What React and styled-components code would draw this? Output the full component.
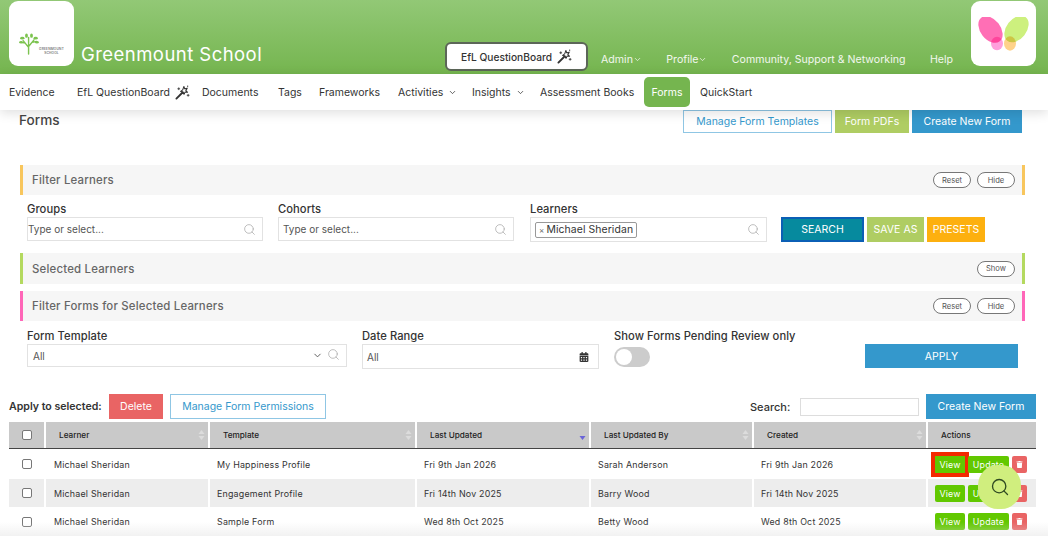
import React from 'react'
import styled, { createGlobalStyle } from 'styled-components'
import { Search, ChevronDown } from 'lucide-react'
import { FaCalendarAlt, FaTrash } from 'react-icons/fa'

const GlobalStyle = createGlobalStyle`
  html, body {
    margin: 0;
    padding: 0;
    background: #fff;
    font-family: Inter, "Open Sans", sans-serif;
    color: #333;
  }
  * { box-sizing: border-box; }
`

const Page = styled.div`
  position: relative;
  width: 1048px;
  height: 536px;
  overflow: hidden;
`

const Header = styled.header`
  display: flex;
  height: 74px;
  padding: 1px 12px 0 9px;
  background: linear-gradient(#92c876, #75b54f);
`

const LogoTile = styled.div`
  width: 65px;
  height: 65px;
  flex: none;
  border-radius: 9px;
  background: #fff;
  display: flex;
  align-items: flex-end;
  justify-content: center;
  padding-bottom: ${p => p.$pad || 0}px;
`

const SchoolLogo = styled.div`
  display: flex;
  align-items: flex-end;
  gap: 0;
  padding-bottom: 9px;
  small {
    font-size: 3.2px;
    line-height: 4px;
    letter-spacing: 0.2px;
    text-align: center;
    color: #333;
    margin-bottom: 2px;
  }
`

const SchoolName = styled.h1`
  margin: 0 0 0 7px;
  align-self: flex-end;
  padding-bottom: 7px;
  font-size: 18.5px;
  line-height: 26px;
  font-weight: 400;
  color: #fff;
  letter-spacing: 0.45px;
  width: 364px;
  flex: none;
`

const BoardButton = styled.div`
  align-self: flex-end;
  margin-bottom: 3px;
  width: 143px;
  height: 29px;
  flex: none;
  background: #fff;
  border: 2px solid #5c6658;
  border-radius: 6px;
  display: flex;
  align-items: center;
  justify-content: center;
  gap: 5px;
  font-size: 10.2px;
  font-weight: 500;
  color: #333;
`

const TopLinks = styled.nav`
  display: flex;
  align-items: center;
  height: 30px;
  align-self: flex-end;
  flex: 1;
  padding: 0 18px 0 13px;
  justify-content: space-between;
`

const TopLink = styled.a`
  display: inline-flex;
  align-items: center;
  font-size: 10.6px;
  color: #f2f7ee;
  white-space: nowrap;
`

const NavBar = styled.nav`
  position: relative;
  z-index: 2;
  display: flex;
  align-items: center;
  height: 36px;
  padding-left: 9px;
  background: #fff;
  box-shadow: 0 3px 12px rgba(0, 0, 0, 0.13);
`

const NavItem = styled.a`
  display: inline-flex;
  align-items: center;
  gap: 5px;
  width: ${p => p.$w}px;
  margin-left: ${p => p.$ml || 0}px;
  flex: none;
  height: 30px;
  font-size: 10.5px;
  color: #333;
  white-space: nowrap;
  ${p => p.$active && `
    justify-content: center;
    background: #75b54f;
    color: #fff;
    border-radius: 5px;
  `}
`

const Content = styled.main`
  padding: 0 23px 0 20px;
`

const TitleRow = styled.div`
  display: flex;
  justify-content: space-between;
  height: 23px;
  padding-right: 3px;
`

const PageTitle = styled.h2`
  margin: 0 0 0 -1px;
  font-size: 13.6px;
  line-height: 21px;
  font-weight: 500;
  color: #444;
`

const TitleActions = styled.div`
  display: flex;
  gap: 3px;
`

const Btn = styled.button`
  width: ${p => p.$w}px;
  height: ${p => p.$h || 24}px;
  margin: ${p => p.$margin || 0};
  flex: none;
  padding: 0;
  font-family: inherit;
  font-size: ${p => p.$size || 10.5}px;
  color: ${p => p.$color || '#fff'};
  background: ${p => p.$bg || '#fff'};
  border: ${p => p.$border || 'none'};
  white-space: nowrap;
`

const Panel = styled.div`
  display: flex;
  align-items: center;
  justify-content: flex-end;
  gap: 6px;
  height: ${p => p.$h || 30}px;
  margin-top: ${p => p.$mt || 0}px;
  padding: 0 7px 0 9px;
  background: #f6f6f6;
  border-left: 3px solid ${p => p.$accent};
  border-right: 3px solid ${p => p.$accent};
`

const PanelTitle = styled.div`
  flex: 1;
  font-size: 11.4px;
  letter-spacing: 0.2px;
  font-weight: 500;
  color: #666;
`

const Pill = styled.button`
  width: ${p => p.$w || 38}px;
  height: 16px;
  padding: 0;
  font-family: inherit;
  font-size: 7.6px;
  color: #555;
  background: #fff;
  border: 1px solid #777;
  border-radius: 8px;
`

const FieldRow = styled.div`
  display: flex;
  align-items: flex-start;
  height: ${p => p.$h}px;
  padding: ${p => p.$pt}px 0 0 7px;
`

const Field = styled.div`
  width: ${p => p.$w}px;
  flex: none;
  margin-right: ${p => p.$mr || 0}px;
`

const Label = styled.label`
  display: block;
  height: 15px;
  font-size: 11.2px;
  line-height: 15px;
  letter-spacing: 0.05px;
  font-weight: 500;
  color: #333;
`

const InputBox = styled.div`
  display: flex;
  align-items: center;
  justify-content: space-between;
  height: ${p => p.$h || 24}px;
  padding: 0 6px 0 ${p => p.$pl ?? 0}px;
  border: 1px solid #e2e2e2;
  background: #fff;
  font-size: 10px;
  color: #555;
  svg { flex: none; }
`

const Tag = styled.span`
  display: inline-flex;
  align-items: center;
  gap: 2px;
  height: 16px;
  padding: 0 3px;
  border: 1px solid #999;
  border-radius: 2px;
  font-size: 10.4px;
  letter-spacing: 0.1px;
  color: #333;
  i {
    font-style: normal;
    font-size: 8px;
    color: #666;
  }
`

const ActionGroup = styled.div`
  display: flex;
  gap: 3px;
  margin: 15px 0 0 14px;
`

const Toggle = styled.div`
  width: 36px;
  height: 20px;
  margin-top: 3px;
  padding: 2px;
  border-radius: 10px;
  background: #ccc;
  &::before {
    content: '';
    display: block;
    width: 16px;
    height: 16px;
    border-radius: 50%;
    background: #fff;
  }
`

const Toolbar = styled.div`
  display: flex;
  align-items: center;
  height: 25px;
  margin: 0 -11px 0 -11px;
`

const ApplyLabel = styled.strong`
  width: 100px;
  flex: none;
  font-size: 10.6px;
  font-weight: 600;
  color: #333;
`

const SearchLabel = styled.span`
  margin-left: auto;
  width: 50px;
  font-size: 11px;
  font-weight: 500;
`

const SearchInput = styled.div`
  width: 119px;
  height: 18px;
  margin-right: 7px;
  border: 1px solid #ddd;
`

const Table = styled.div`
  margin: 3px -11px 0 -11px;
`

const gridColumns = '37px 164px 207px 174px 163px 174px 108px'

const HeadRow = styled.div`
  display: grid;
  grid-template-columns: ${gridColumns};
  height: 27px;
  border-bottom: 1px solid #444;
`

const HeadCell = styled.div`
  display: flex;
  align-items: center;
  justify-content: ${p => (p.$center ? 'center' : 'space-between')};
  padding: 0 ${p => (p.$center ? 0 : 3)}px 0 ${p => (p.$center ? 0 : 13)}px;
  margin-right: 2px;
  background: #c9c9c9;
  font-size: 8.2px;
  font-weight: 500;
  color: #222;
  &:last-child { margin-right: 0; }
`

const BodyRow = styled.div`
  display: grid;
  grid-template-columns: ${gridColumns};
  height: ${p => p.$h}px;
`

const BodyCell = styled.div`
  display: flex;
  align-items: center;
  justify-content: ${p => (p.$center ? 'center' : 'flex-start')};
  gap: 3px;
  padding-left: ${p => (p.$center ? 0 : p.$learner ? 8 : 7)}px;
  margin-right: 2px;
  background: ${p => (p.$alt ? '#ededed' : '#fff')};
  font-size: 8.9px;
  letter-spacing: 0.2px;
  font-weight: 400;
  color: #333;
  &:last-child { margin-right: 0; }
`

const Check = styled.span`
  display: block;
  width: 10px;
  height: 10px;
  background: #fff;
  border: 1px solid #777;
  border-radius: 2px;
`

const MiniBtn = styled.span`
  display: inline-flex;
  align-items: center;
  justify-content: center;
  width: ${p => p.$w}px;
  height: 17px;
  flex: none;
  border-radius: 2px;
  background: ${p => p.$bg};
  color: #fff;
  font-size: 8.8px;
  font-weight: 400;
  ${p => p.$focus && 'border-radius: 0; outline: 4px solid #f32a00; outline-offset: 0;'}
`

const BottomFade = styled.div`
  position: absolute;
  left: 0;
  right: 0;
  bottom: 0;
  height: 14px;
  background: linear-gradient(rgba(225, 225, 225, 0), rgba(225, 225, 225, 0.45));
  pointer-events: none;
`

const FloatSearch = styled.div`
  position: absolute;
  left: 978px;
  top: 465px;
  width: 43px;
  height: 44px;
  display: flex;
  align-items: center;
  justify-content: center;
  border-radius: 46%;
  background: #d0ee7e;
  color: #2f4a22;
`

const WandIcon = ({ size = 15, color = '#333' }) => (
  <svg width={size} height={size} viewBox="0 0 16 16" fill="none" stroke={color} strokeLinecap="round">
    <path d="M1.5 14.5 8 8" strokeWidth="2" />
    <path d="M9.5 1.5 10.3 4 13 3.6 11.5 5.8 13.4 7.8 10.7 7.6 9.6 10 8.6 7.4 6 6.8 8.2 5.2Z" strokeWidth="1.1" strokeLinejoin="round" />
    <path d="M4 3v2M3 4h2M14 10v2M13 11h2M13.5 1v1" strokeWidth="0.9" />
  </svg>
)

const TreeIcon = () => (
  <svg width="20" height="26" viewBox="0 0 24 26" fill="none" stroke="#7cc34f" strokeLinecap="round">
    <path d="M11.5 25V13M11.5 17 5 9M11.5 16 18 8M11.5 12V5M7.5 12 3 11M15.5 11 21 10" strokeWidth="1.7" />
    <g fill="#7cc34f" stroke="none">
      <ellipse cx="4" cy="6" rx="2.6" ry="1.6" />
      <ellipse cx="9" cy="3" rx="1.7" ry="2.6" />
      <ellipse cx="15" cy="3" rx="1.7" ry="2.6" />
      <ellipse cx="20" cy="6" rx="2.6" ry="1.6" />
      <ellipse cx="2.5" cy="11" rx="2.3" ry="1.5" />
      <ellipse cx="21.5" cy="11" rx="2.3" ry="1.5" />
    </g>
  </svg>
)

const Butterfly = () => (
  <svg width="51" height="34" viewBox="0 0 51 34" style={{ isolation: 'isolate' }}>
    <g style={{ mixBlendMode: 'multiply' }}>
      <ellipse cx="19" cy="26.5" rx="6" ry="6.8" fill="#ff9fdc" />
    </g>
    <g style={{ mixBlendMode: 'multiply' }}>
      <ellipse cx="32" cy="26.5" rx="6" ry="7.2" fill="#ffd28a" />
    </g>
    <g style={{ mixBlendMode: 'multiply' }}>
      <ellipse cx="12.5" cy="12.5" rx="10" ry="15" transform="rotate(-38 12.5 12.5)" fill="#ff6fb5" />
    </g>
    <g style={{ mixBlendMode: 'multiply' }}>
      <ellipse cx="38.5" cy="12" rx="10" ry="15" transform="rotate(38 38.5 12)" fill="#cdf07e" />
    </g>
  </svg>
)

const SortArrows = ({ active }) => (
  <svg width="7" height="12" viewBox="0 0 7 12">
    {!active && <path d="M3.5 1 6.5 5H.5Z" fill="#dcdcdc" />}
    <path d="M3.5 11 .5 7h6Z" fill={active ? '#6a64d8' : '#dcdcdc'} />
  </svg>
)

const rows = [
  { template: 'My Happiness Profile', updated: 'Fri 9th Jan 2026', by: 'Sarah Anderson', h: 30 },
  { template: 'Engagement Profile', updated: 'Fri 14th Nov 2025', by: 'Barry Wood', h: 28, alt: true },
  { template: 'Sample Form', updated: 'Wed 8th Oct 2025', by: 'Betty Wood', h: 29 }
]

const navItems = [
  ['Evidence', 68],
  ['EfL QuestionBoard', 125, 'wand'],
  ['Documents', 76],
  ['Tags', 41],
  ['Frameworks', 79],
  ['Activities', 74, 'chevron'],
  ['Insights', 68, 'chevron'],
  ['Assessment Books', 104]
]

const columns = ['Learner', 'Template', 'Last Updated', 'Last Updated By', 'Created']

const App = () => (
  <Page>
    <GlobalStyle />
    <Header>
      <LogoTile>
        <SchoolLogo>
          <TreeIcon />
          <small>
            GREENMOUNT
            <br />
            SCHOOL
          </small>
        </SchoolLogo>
      </LogoTile>
      <SchoolName>Greenmount School</SchoolName>
      <BoardButton>
        EfL QuestionBoard <WandIcon />
      </BoardButton>
      <TopLinks>
        <TopLink>
          Admin
          <ChevronDown size={9} />
        </TopLink>
        <TopLink>
          Profile
          <ChevronDown size={9} />
        </TopLink>
        <TopLink>Community, Support &amp; Networking</TopLink>
        <TopLink>Help</TopLink>
      </TopLinks>
      <LogoTile $pad={15}>
        <Butterfly />
      </LogoTile>
    </Header>

    <NavBar>
      {navItems.map(([label, w, icon]) => (
        <NavItem key={label} $w={w}>
          {label}
          {icon === 'wand' && <WandIcon />}
          {icon === 'chevron' && <ChevronDown size={9} />}
        </NavItem>
      ))}
      <NavItem $w={46} $active>
        Forms
      </NavItem>
      <NavItem $w={60} $ml={10}>
        QuickStart
      </NavItem>
    </NavBar>

    <Content>
      <TitleRow>
        <PageTitle>Forms</PageTitle>
        <TitleActions>
          <Btn $w={149} $h={23} $color="#3498cc" $border="1px solid #8fc6e4">
            Manage Form Templates
          </Btn>
          <Btn $w={74} $h={23} $bg="#afcd63">
            Form PDFs
          </Btn>
          <Btn $w={110} $h={23} $bg="#3498cc">
            Create New Form
          </Btn>
        </TitleActions>
      </TitleRow>

      <Panel $accent="#f8c65d" $mt={32}>
        <PanelTitle>Filter Learners</PanelTitle>
        <Pill>Reset</Pill>
        <Pill>Hide</Pill>
      </Panel>
      <FieldRow $h={58} $pt={7}>
        <Field $w={236} $mr={15}>
          <Label>Groups</Label>
          <InputBox>
            Type or select...
            <Search size={13} color="#aaa" strokeWidth={1.4} />
          </InputBox>
        </Field>
        <Field $w={236} $mr={16}>
          <Label>Cohorts</Label>
          <InputBox $pl={4}>
            Type or select...
            <Search size={13} color="#aaa" strokeWidth={1.4} />
          </InputBox>
        </Field>
        <Field $w={237}>
          <Label>Learners</Label>
          <InputBox $h={25} $pl={4}>
            <Tag>
              <i>×</i>Michael Sheridan
            </Tag>
            <Search size={13} color="#aaa" strokeWidth={1.4} />
          </InputBox>
        </Field>
        <ActionGroup>
          <Btn $w={83} $h={25} $bg="#068a9e" $border="2px solid #0b5fb5">
            SEARCH
          </Btn>
          <Btn $w={57} $h={25} $bg="#afcd63">
            SAVE AS
          </Btn>
          <Btn $w={58} $h={25} $bg="#fdb00f">
            PRESETS
          </Btn>
        </ActionGroup>
      </FieldRow>

      <Panel $accent="#b4d95f" $h={31}>
        <PanelTitle>Selected Learners</PanelTitle>
        <Pill>Show</Pill>
      </Panel>
      <Panel $accent="#ff66b8" $mt={7}>
        <PanelTitle>Filter Forms for Selected Learners</PanelTitle>
        <Pill>Reset</Pill>
        <Pill>Hide</Pill>
      </Panel>
      <FieldRow $h={73} $pt={8}>
        <Field $w={320} $mr={15}>
          <Label>Form Template</Label>
          <InputBox $h={23} $pl={5}>
            All
            <span>
              <ChevronDown size={11} color="#555" />
              <Search size={13} color="#aaa" strokeWidth={1.4} style={{ marginLeft: 4 }} />
            </span>
          </InputBox>
        </Field>
        <Field $w={237} $mr={15}>
          <Label>Date Range</Label>
          <InputBox $h={25} $pl={4}>
            All
            <FaCalendarAlt size={10} color="#333" style={{ marginRight: 3 }} />
          </InputBox>
        </Field>
        <Field $w={251}>
          <Label>Show Forms Pending Review only</Label>
          <Toggle />
        </Field>
        <Btn $w={153} $h={24} $bg="#3498cc" $margin="15px 0 0">
          APPLY
        </Btn>
      </FieldRow>

      <Toolbar>
        <ApplyLabel>Apply to selected:</ApplyLabel>
        <Btn $w={54} $h={25} $bg="#e96464">
          Delete
        </Btn>
        <Btn $w={156} $h={25} $color="#3498cc" $border="1px solid #8fc6e4" $margin="0 0 0 7px">
          Manage Form Permissions
        </Btn>
        <SearchLabel>Search:</SearchLabel>
        <SearchInput />
        <Btn $w={110} $h={25} $bg="#3498cc">
          Create New Form
        </Btn>
      </Toolbar>

      <Table>
        <HeadRow>
          <HeadCell $center>
            <Check />
          </HeadCell>
          {columns.map(col => (
            <HeadCell key={col}>
              {col}
              <SortArrows active={col === 'Last Updated'} />
            </HeadCell>
          ))}
          <HeadCell>Actions</HeadCell>
        </HeadRow>
        {rows.map((row, i) => (
          <BodyRow key={row.template} $h={row.h}>
            <BodyCell $center $alt={row.alt}>
              <Check />
            </BodyCell>
            <BodyCell $alt={row.alt} $learner>
              Michael Sheridan
            </BodyCell>
            <BodyCell $alt={row.alt}>{row.template}</BodyCell>
            <BodyCell $alt={row.alt}>{row.updated}</BodyCell>
            <BodyCell $alt={row.alt}>{row.by}</BodyCell>
            <BodyCell $alt={row.alt}>{row.updated}</BodyCell>
            <BodyCell $alt={row.alt}>
              <MiniBtn $w={30} $bg="#62c800" $focus={i === 0}>
                View
              </MiniBtn>
              <MiniBtn $w={41} $bg="#62c800">
                Update
              </MiniBtn>
              <MiniBtn $w={15} $bg="#e96464">
                <FaTrash size={7} />
              </MiniBtn>
            </BodyCell>
          </BodyRow>
        ))}
      </Table>
    </Content>

    <BottomFade />
    <FloatSearch>
      <Search size={20} strokeWidth={1.6} />
    </FloatSearch>
  </Page>
)

export default App
